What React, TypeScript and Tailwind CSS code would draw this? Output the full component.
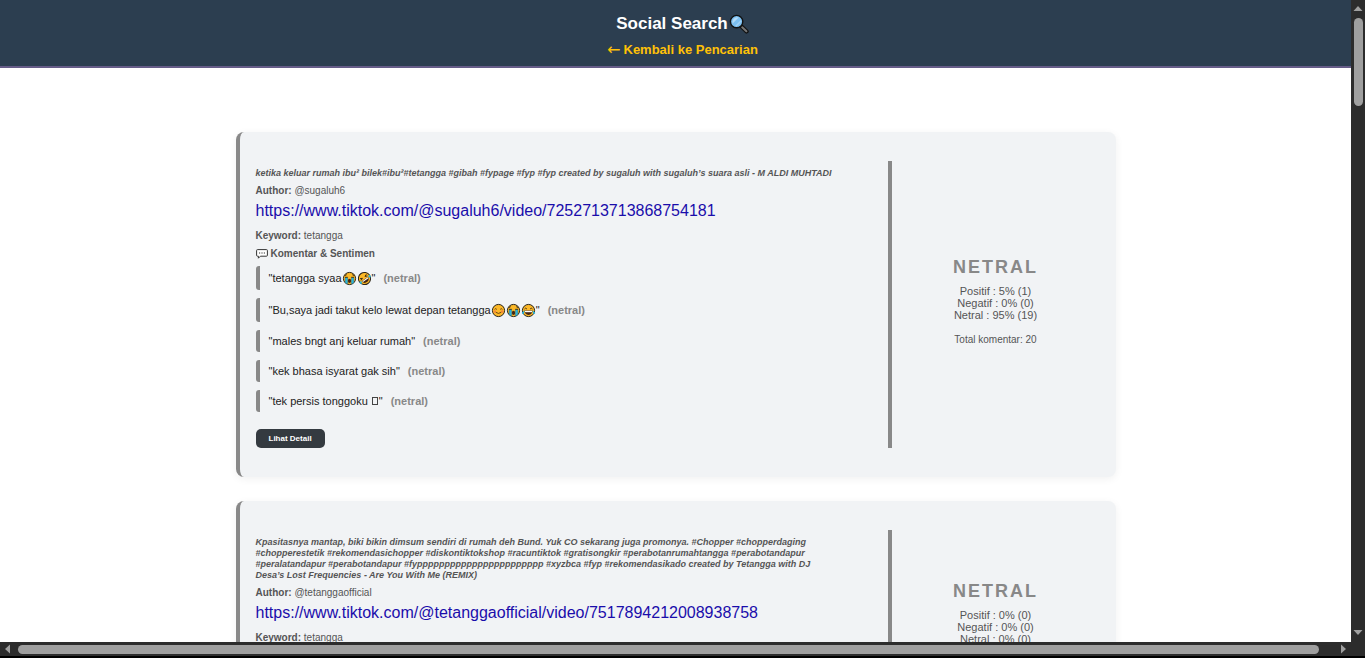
import type { ReactNode } from "react";

function Magnifier() {
  return (
    <svg viewBox="0 0 20 20" className="h-5 w-5" aria-hidden="true">
      <path d="M11.5 11.5 L17.6 17.4" stroke="#111" strokeWidth="4.2" strokeLinecap="round" />
      <path d="M13.2 13.2 L17.4 17.3" stroke="#777" strokeWidth="2" strokeLinecap="round" />
      <circle cx="7.6" cy="7.6" r="6.2" fill="#7cc0f2" stroke="#111" strokeWidth="1.4" />
      <path d="M3.6 9.6 L9.6 3.4 A5 5 0 0 0 3.6 9.6Z" fill="#b5dcf8" />
      <path d="M6 12 L12 6 L12.4 7.6 L7.6 12.5Z" fill="#a3d2f5" />
    </svg>
  );
}

function SpeechBubble() {
  return (
    <svg viewBox="0 0 12 10" className="h-[10px] w-3" aria-hidden="true">
      <path
        d="M1.5 .6 H10.5 Q11.4 .6 11.4 1.5 V6.3 Q11.4 7.2 10.5 7.2 H4.4 L2.4 9.2 V7.2 H1.5 Q.6 7.2 .6 6.3 V1.5 Q.6 .6 1.5 .6Z"
        fill="#fff"
        stroke="#333"
        strokeWidth="1"
      />
      <path d="M3 4h1.2M5.4 4h1.2M7.8 4H9" stroke="#333" strokeWidth="1.1" />
    </svg>
  );
}

function Face({ label, children, tilt }: { label: string; children: ReactNode; tilt?: boolean }) {
  return (
    <svg viewBox="0 0 15 15" className="h-[15px] w-[15px] shrink-0" role="img" aria-label={label}>
      <g transform={tilt ? "rotate(-35 7.5 7.5)" : undefined}>
        <circle cx="7.5" cy="7.5" r="6.1" fill="#fcb827" stroke="#2a2418" strokeWidth="1" />
        {children}
      </g>
    </svg>
  );
}

function Crying() {
  return (
    <Face label="menangis">
      <path d="M3.2 6.6h2.4v6.2l-1.1-.2-1.3-1zM9.4 6.6h2.4v5l-1.3 1-1.1.2z" fill="#27b5dd" stroke="#176f96" strokeWidth=".4" />
      <path d="M3 4.6l1.8-1M12 4.6l-1.8-1M3 6.3h2.8M9.2 6.3H12" stroke="#3b2a12" strokeWidth=".9" fill="none" />
      <ellipse cx="7.5" cy="9.9" rx="1.6" ry="2.1" fill="#442714" />
    </Face>
  );
}

function Rofl() {
  return (
    <Face label="tertawa berguling" tilt>
      <path d="M3.6 5.1l2.3 1-2.3 1M11.4 5.1l-2.3 1 2.3 1" stroke="#3b2a12" strokeWidth=".9" fill="none" />
      <path d="M3.6 8.2h7.8q-.5 3.7-3.9 3.7T3.6 8.2z" fill="#442714" />
      <path d="M4.2 8.4h6.6v1.2H4.2z" fill="#fff" />
      <path d="M1.2 7.4l2.2.3-.6 2.2q-1.8.4-1.8-.9zM13.8 7.4l-2.2.3.6 2.2q1.8.4 1.8-.9z" fill="#27b5dd" />
    </Face>
  );
}

function Smile() {
  return (
    <Face label="tersenyum">
      <circle cx="3.8" cy="8.6" r="1.3" fill="#f58a3c" />
      <circle cx="11.2" cy="8.6" r="1.3" fill="#f58a3c" />
      <path d="M3.6 6.4q1-1.5 2.2 0M9.2 6.4q1-1.5 2.2 0M4.8 9.3q2.7 2.3 5.4 0" stroke="#5b3a12" strokeWidth=".9" fill="none" />
    </Face>
  );
}

function Joy() {
  return (
    <Face label="tertawa">
      <path d="M3.5 6q1.1-1.7 2.4 0M9.1 6q1.1-1.7 2.4 0" stroke="#3b2a12" strokeWidth=".9" fill="none" />
      <path d="M3.4 7.6h8.2q-.5 4.3-4.1 4.3T3.4 7.6z" fill="#442714" />
      <path d="M4 7.8h7v1.4H4z" fill="#fff" />
      <path d="M3.4 7.2l-.4 3.4q-2 .9-2.2-.9zM11.6 7.2l.4 3.4q2 .9 2.2-.9z" fill="#27b5dd" />
    </Face>
  );
}

function MissingGlyph() {
  return <span className="mr-px ml-1 inline-block h-2 w-[6px] border border-[#444]" />;
}

type Comment = { text: string; extra?: ReactNode; faces?: boolean };

type Post = {
  title: string;
  author: string;
  url: string;
  keyword: string;
  comments: Comment[];
  positive: string;
  negative: string;
  neutral: string;
  total: number;
};

const posts: Post[] = [
  {
    title:
      "ketika keluar rumah ibu² bilek#ibu²#tetangga #gibah #fypage #fyp #fyp created by sugaluh with sugaluh’s suara asli - M ALDI MUHTADI",
    author: "@sugaluh6",
    url: "https://www.tiktok.com/@sugaluh6/video/7252713713868754181",
    keyword: "tetangga",
    comments: [
      { text: "tetangga syaa", extra: <><Crying /><Rofl /></>, faces: true },
      { text: "Bu,saya jadi takut kelo lewat depan tetangga", extra: <><Smile /><Crying /><Joy /></>, faces: true },
      { text: "males bngt anj keluar rumah" },
      { text: "kek bhasa isyarat gak sih" },
      { text: "tek persis tonggoku", extra: <MissingGlyph /> },
    ],
    positive: "5% (1)",
    negative: "0% (0)",
    neutral: "95% (19)",
    total: 20,
  },
  {
    title:
      "Kpasitasnya mantap, biki bikin dimsum sendiri di rumah deh Bund. Yuk CO sekarang juga promonya. #Chopper #chopperdaging #chopperestetik #rekomendasichopper #diskontiktokshop #racuntiktok #gratisongkir #perabotanrumahtangga #perabotandapur #peralatandapur #perabotandapur #fyppppppppppppppppppppppp #xyzbca #fyp #rekomendasikado created by Tetangga with DJ Desa’s Lost Frequencies - Are You With Me (REMIX)",
    author: "@tetanggaofficial",
    url: "https://www.tiktok.com/@tetanggaofficial/video/7517894212008938758",
    keyword: "tetangga",
    comments: [],
    positive: "0% (0)",
    negative: "0% (0)",
    neutral: "0% (0)",
    total: 0,
  },
];

function CommentRow({ comment }: { comment: Comment }) {
  return (
    <li
      className={`flex items-center rounded-[3px] border-l-4 border-[#888] pl-[9px] text-[11px] text-[#222] ${
        comment.faces ? "h-6" : "h-[22px]"
      }`}
    >
      <span className="flex items-center">
        "{comment.text}
        {comment.extra}"
      </span>
      <strong className="ml-2 text-[#888]">(netral)</strong>
    </li>
  );
}

function PostCard({ post }: { post: Post }) {
  return (
    <article className="flex rounded-lg border-l-4 border-[#888] bg-[#f1f3f5] px-4 py-[29px] shadow-[0_2px_8px_rgba(0,0,0,0.06)]">
      <div className="min-w-0 flex-1 pt-[7px] pr-4 text-[10px] leading-3 text-[#555]">
        <h2 className="max-w-[580px] text-[9px] leading-[11px] font-bold italic">{post.title}</h2>
        <p className="mt-[6px]">
          <strong>Author:</strong> {post.author}
        </p>
        <a href={post.url} className="mt-[5px] block text-base leading-[18px] text-[#1a0dab]">
          {post.url}
        </a>
        <p className="mt-[10px]">
          <strong>Keyword:</strong> {post.keyword}
        </p>
        <h3 className="mt-[6px] flex items-center gap-[3px] font-bold">
          <SpeechBubble />
          Komentar &amp; Sentimen
        </h3>
        <ul className="mt-[6px] flex flex-col gap-2">
          {post.comments.map((comment) => (
            <CommentRow key={comment.text} comment={comment} />
          ))}
          {post.comments.length === 0 && <li className="h-[22px]" />}
        </ul>
        <button
          type="button"
          className="mt-[17px] block h-[19px] rounded-[5px] bg-[#343a40] px-[13px] text-[8px] leading-none font-bold text-white"
        >
          Lihat Detail
        </button>
      </div>
      <div className="flex w-[212px] flex-col justify-center border-l-4 border-[#888] pb-[7px] text-center text-[11px] leading-3 text-[#555]">
        <strong className="text-lg leading-[22px] tracking-[2px] text-[#888]">NETRAL</strong>
        <p className="mt-[7px]">Positif : {post.positive}</p>
        <p>Negatif : {post.negative}</p>
        <p>Netral : {post.neutral}</p>
        <p className="mt-[13px] text-[10px]">Total komentar: {post.total}</p>
      </div>
    </article>
  );
}

function Arrow({ points }: { points: string }) {
  return (
    <svg viewBox="0 0 10 10" className="h-[10px] w-[10px] shrink-0" aria-hidden="true">
      <polygon points={points} fill="#a0a0a0" />
    </svg>
  );
}

export default function App() {
  return (
    <div className="flex h-screen flex-col overflow-hidden bg-white font-['Liberation_Sans',Arial,sans-serif]">
      <div className="flex min-h-0 flex-1">
        <main className="min-w-0 flex-1 overflow-hidden">
          <header className="flex w-screen flex-col items-center border-b-2 border-[#665c88] bg-[#2c3e50] pt-[14px] pb-[9px]">
            <h1 className="flex items-center gap-px text-[17px] leading-5 font-bold text-white">
              Social Search
              <Magnifier />
            </h1>
            <a
              href="#pencarian"
              className="mt-2 flex items-center gap-[3px] text-[13px] leading-[15px] font-bold text-[#ffc107]"
            >
              <span className="font-['DejaVu_Sans',sans-serif] text-base leading-[15px] font-normal">←</span>
              Kembali ke Pencarian
            </a>
          </header>
          <section className="mx-auto mt-16 flex max-w-[880px] flex-col gap-6">
            {posts.map((post) => (
              <PostCard key={post.url} post={post} />
            ))}
          </section>
        </main>
        <div className="flex w-[14px] shrink-0 flex-col items-center bg-[#2c2c2c] pt-[3px] pb-[5px]" aria-hidden="true">
          <Arrow points="5,3 9.5,8 0.5,8" />
          <div className="mt-[5px] min-h-0 flex-1">
            <div className="h-[88px] w-[9px] rounded-full bg-[#9f9f9f]" />
          </div>
          <Arrow points="0.5,3 9.5,3 5,8" />
        </div>
      </div>
      <div className="flex h-[14px] shrink-0 items-center bg-[#2c2c2c] pr-[17px] pl-[3px]" aria-hidden="true">
        <Arrow points="7,0.5 7,9.5 2,5" />
        <div className="mr-[19px] ml-[5px] h-[9px] flex-1 rounded-full bg-[#9f9f9f]" />
        <Arrow points="3,0.5 3,9.5 8,5" />
      </div>
      <div className="h-[2px] shrink-0 bg-black" />
    </div>
  );
}
